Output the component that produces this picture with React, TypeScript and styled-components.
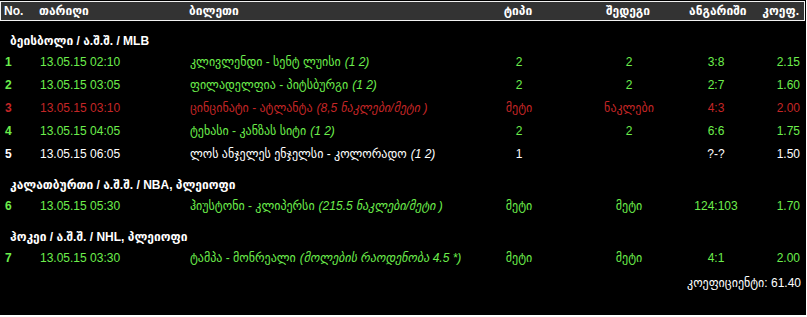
import styled, { createGlobalStyle } from "styled-components";

const GlobalStyle = createGlobalStyle`
  body {
    margin: 0;
    background: #ffffff;
    font-family: "Liberation Sans Narrow", "Liberation Sans", "DejaVu Sans", sans-serif;
  }
`;

type Tone = "green" | "red" | "white";

const toneColor: Record<Tone, string> = {
  green: "#6cee4c",
  red: "#c42626",
  white: "#ffffff",
};

interface Bet {
  no: number;
  date: string;
  match: string;
  note: string;
  type: string;
  result: string;
  score: string;
  odds: string;
  tone: Tone;
}

interface Section {
  title: string;
  bets: Bet[];
}

const sections: Section[] = [
  {
    title: "ბეისბოლი / ა.შ.შ. / MLB",
    bets: [
      { no: 1, date: "13.05.15 02:10", match: "კლივლენდი - სენტ ლუისი", note: "(1 2)", type: "2", result: "2", score: "3:8", odds: "2.15", tone: "green" },
      { no: 2, date: "13.05.15 03:05", match: "ფილადელფია - პიტსბურგი", note: "(1 2)", type: "2", result: "2", score: "2:7", odds: "1.60", tone: "green" },
      { no: 3, date: "13.05.15 03:10", match: "ცინცინატი - ატლანტა", note: "(8,5 ნაკლები/მეტი )", type: "მეტი", result: "ნაკლები", score: "4:3", odds: "2.00", tone: "red" },
      { no: 4, date: "13.05.15 04:05", match: "ტეხასი - კანზას სიტი", note: "(1 2)", type: "2", result: "2", score: "6:6", odds: "1.75", tone: "green" },
      { no: 5, date: "13.05.15 06:05", match: "ლოს ანჯელეს ენჯელსი - კოლორადო", note: "(1 2)", type: "1", result: "", score: "?-?", odds: "1.50", tone: "white" },
    ],
  },
  {
    title: "კალათბურთი / ა.შ.შ. / NBA, პლეიოფი",
    bets: [
      { no: 6, date: "13.05.15 05:30", match: "ჰიუსტონი - კლიპერსი", note: "(215.5 ნაკლები/მეტი )", type: "მეტი", result: "მეტი", score: "124:103", odds: "1.70", tone: "green" },
    ],
  },
  {
    title: "ჰოკეი / ა.შ.შ. / NHL, პლეიოფი",
    bets: [
      { no: 7, date: "13.05.15 03:30", match: "ტამპა - მონრეალი", note: "(მოლების რაოდენობა 4.5 *)", type: "მეტი", result: "მეტი", score: "4:1", odds: "2.00", tone: "green" },
    ],
  },
];

const Board = styled.div`
  width: 806px;
  height: 315px;
  background: #000000;
  box-sizing: border-box;
  padding-top: 1px;
  font-size: 12px;
  color: #ffffff;
  display: flex;
  flex-direction: column;
`;

const columns = "35px 150px 280px 98px 122px 52px 58px";

const HeaderBar = styled.div`
  margin: 0 1px 0 0;
  height: 20px;
  box-sizing: border-box;
  border: 1px solid #f2f2f2;
  background: #333333;
  display: grid;
  grid-template-columns: ${columns};
  align-items: center;
  padding: 0 4px 0 3px;
  font-weight: bold;
  white-space: nowrap;
`;

const Cell = styled.div<{ $align?: "left" | "center" | "right" }>`
  text-align: ${(p) => p.$align ?? "left"};
  white-space: nowrap;
`;

const SectionBlock = styled.div`
  padding-top: 12px;
`;

const SectionTitle = styled.div`
  height: 17px;
  line-height: 17px;
  padding-left: 10px;
  font-weight: bold;
`;

const Row = styled.div<{ $tone: Tone }>`
  height: 23px;
  display: grid;
  grid-template-columns: ${columns};
  align-items: center;
  padding: 0 5px 0 5px;
  color: ${(p) => toneColor[p.$tone]};
`;

const Num = styled(Cell)`
  font-weight: bold;
`;

const Note = styled.i`
  margin-left: 4px;
`;

const Total = styled.div`
  margin-top: 6px;
  padding-right: 5px;
  text-align: right;
  height: 16px;
  line-height: 16px;
`;

export default function App() {
  return (
    <>
      <GlobalStyle />
      <Board>
        <HeaderBar>
          <Cell>No.</Cell>
          <Cell>თარიღი</Cell>
          <Cell>ბილეთი</Cell>
          <Cell $align="center">ტიპი</Cell>
          <Cell $align="center">შედეგი</Cell>
          <Cell $align="center">ანგარიში</Cell>
          <Cell $align="right">კოეფ.</Cell>
        </HeaderBar>
        {sections.map((s) => (
          <SectionBlock key={s.title}>
            <SectionTitle>{s.title}</SectionTitle>
            {s.bets.map((b) => (
              <Row key={b.no} $tone={b.tone}>
                <Num>{b.no}</Num>
                <Cell>{b.date}</Cell>
                <Cell>
                  {b.match}
                  <Note>{b.note}</Note>
                </Cell>
                <Cell $align="center">{b.type}</Cell>
                <Cell $align="center">{b.result}</Cell>
                <Cell $align="center">{b.score}</Cell>
                <Cell $align="right">{b.odds}</Cell>
              </Row>
            ))}
          </SectionBlock>
        ))}
        <Total>კოეფიციენტი: 61.40</Total>
      </Board>
    </>
  );
}
